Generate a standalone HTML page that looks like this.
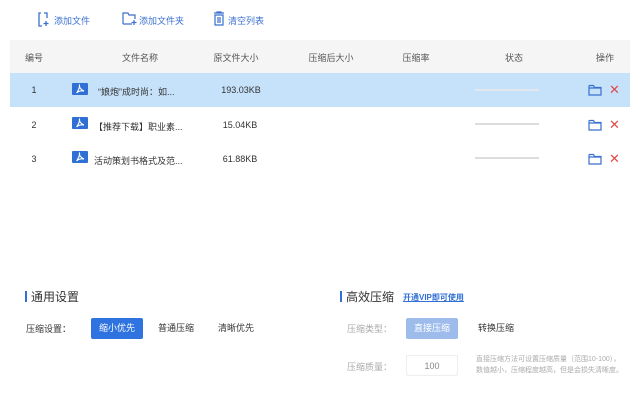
<!DOCTYPE html>
<html><head><meta charset="utf-8"><style>
*{margin:0;padding:0;box-sizing:border-box}
body{width:640px;height:405px;background:#fff;font-family:"Liberation Sans","Noto Sans CJK SC",sans-serif;font-size:9px;color:#333;position:relative;overflow:hidden}
.a{position:absolute;white-space:nowrap}
.tb{color:#3a6fd0;font-size:9px}
.hd{position:absolute;left:10px;top:40px;width:620px;height:33px;background:#f5f5f5}
.row{position:absolute;left:10px;width:620px;height:34px}
.c{position:absolute;transform:translateX(-50%);white-space:nowrap}
.pdf{position:absolute;width:16px;height:12px}
.bar{position:absolute;left:475px;width:64px;height:2px;background:#ddd}
.fold{position:absolute;left:588px}
.x{position:absolute;left:609px;color:#e04a4a;font-size:13px}
.btn{position:absolute;height:21px;line-height:21px;text-align:center;border-radius:2px;font-size:9px}
</style></head><body>
<svg class="a" style="left:37px;top:12px" width="13" height="15" viewBox="0 0 13 15"><path d="M4 1H2v13h3M7 1h3v5" fill="none" stroke="#3a6fd0" stroke-width="1.3"/><path d="M9 9v5M6.5 11.5h5" stroke="#3a6fd0" stroke-width="1.3"/></svg>
<div class="a tb" style="left:54px;top:14px">添加文件</div>
<svg class="a" style="left:122px;top:12px" width="16" height="14" viewBox="0 0 16 14"><path d="M1 12V1h5l1 2h6v4M10 12H1" fill="none" stroke="#3a6fd0" stroke-width="1.2"/><path d="M12 8v5M9.5 10.5h5" stroke="#3a6fd0" stroke-width="1.2"/></svg>
<div class="a tb" style="left:139px;top:14px">添加文件夹</div>
<svg class="a" style="left:213px;top:11px" width="12" height="15" viewBox="0 0 12 15"><path d="M1 2h10M4 2V1h4v1M2 4h8v10H2zM5 6v6M7 6v6" fill="none" stroke="#3a6fd0" stroke-width="1.2"/></svg>
<div class="a tb" style="left:228px;top:14px">清空列表</div>

<div class="hd"></div>
<div class="c" style="left:34px;top:51px;color:#555">编号</div>
<div class="c" style="left:140px;top:51px;color:#555">文件名称</div>
<div class="c" style="left:236px;top:51px;color:#555">原文件大小</div>
<div class="c" style="left:331px;top:51px;color:#555">压缩后大小</div>
<div class="c" style="left:416px;top:51px;color:#555">压缩率</div>
<div class="c" style="left:514px;top:51px;color:#555">状态</div>
<div class="c" style="left:605px;top:51px;color:#555">操作</div>

<div class="row" style="top:73px;background:#c6e2fa"></div>

<svg width="0" height="0" style="position:absolute"><defs><symbol id="p" viewBox="0 0 16 12"><rect width="16" height="12" rx="1" fill="#2f6fd6"/><path d="M5 9.5C7 6 8 4 7.5 2.5 7 4 9 7 12 8 9 7.5 6 8.5 4.5 10" fill="none" stroke="#fff" stroke-width="1.2"/></symbol><symbol id="f" viewBox="0 0 14 12"><path d="M1 2V11h12V3.5H6.5L5.5 1.5H1.5z M1 4h12" fill="none" stroke="#3a6fd0" stroke-width="1.2"/></symbol></defs></svg>

<div class="c" style="left:34px;top:85px">1</div>
<svg class="pdf" style="left:72px;top:83px"><use href="#p"/></svg>
<div class="a" style="left:98px;top:85px">“娘炮”成时尚：如...</div>
<div class="c" style="left:241px;top:85px">193.03KB</div>
<div class="bar" style="top:89px;background:#e3e8ee"></div>
<svg class="fold" style="top:84px" width="14" height="12"><use href="#f"/></svg><div class="x" style="top:82px">✕</div>

<div class="c" style="left:34px;top:120px">2</div>
<svg class="pdf" style="left:72px;top:117px"><use href="#p"/></svg>
<div class="a" style="left:94px;top:120px">【推荐下载】职业素...</div>
<div class="c" style="left:240px;top:120px">15.04KB</div>
<div class="bar" style="top:123px"></div>
<svg class="fold" style="top:119px" width="14" height="12"><use href="#f"/></svg><div class="x" style="top:117px">✕</div>

<div class="c" style="left:34px;top:154px">3</div>
<svg class="pdf" style="left:72px;top:151px"><use href="#p"/></svg>
<div class="a" style="left:94px;top:154px">活动策划书格式及范...</div>
<div class="c" style="left:240px;top:154px">61.88KB</div>
<div class="bar" style="top:157px"></div>
<svg class="fold" style="top:153px" width="14" height="12"><use href="#f"/></svg><div class="x" style="top:151px">✕</div>

<div class="a" style="left:25px;top:291px;width:2px;height:11px;background:#2f6fd6"></div>
<div class="a" style="left:31px;top:288px;font-size:12px;color:#333">通用设置</div>
<div class="a" style="left:26px;top:322px;color:#333">压缩设置：</div>
<div class="btn" style="left:91px;top:318px;width:52px;background:#2f73e0;color:#fff">缩小优先</div>
<div class="btn" style="left:150px;top:318px;width:52px">普通压缩</div>
<div class="btn" style="left:210px;top:318px;width:52px">清晰优先</div>

<div class="a" style="left:340px;top:291px;width:2px;height:11px;background:#2f6fd6"></div>
<div class="a" style="left:346px;top:288px;font-size:12px;color:#333">高效压缩</div>
<div class="a" style="left:403px;top:292px;font-size:8px;color:#2f6fd6;text-decoration:underline;font-weight:bold">开通VIP即可使用</div>
<div class="a" style="left:347px;top:322px;color:#aaa">压缩类型：</div>
<div class="btn" style="left:406px;top:318px;width:52px;background:#9dbcec;color:#fff">直接压缩</div>
<div class="btn" style="left:470px;top:318px;width:52px">转换压缩</div>
<div class="a" style="left:347px;top:360px;color:#aaa">压缩质量：</div>
<div class="btn" style="left:406px;top:355px;width:52px;border:1px solid #eee;color:#888">100</div>
<div class="a" style="left:476px;top:354px;font-size:7px;color:#aaa;line-height:11px">直接压缩方法可设置压缩质量（范围10-100），<br>数值越小，压缩程度越高，但是会损失清晰度。</div>
</body></html>
